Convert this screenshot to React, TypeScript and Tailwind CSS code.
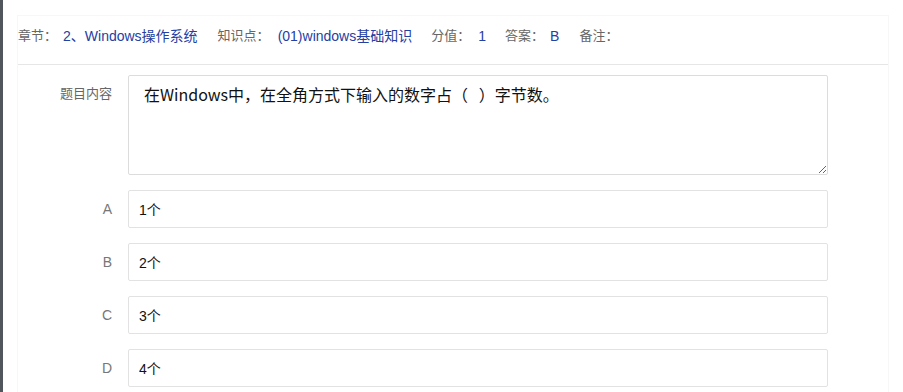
import React from "react";

const font = "font-['Liberation_Sans','Noto_Sans_CJK_SC',sans-serif]";

function Opt({ k, v }: { k: string; v: string }) {
  return (
    <div className="flex items-center">
      <div className="w-[110px] pr-[16px] text-right text-[14px] text-[#777]">{k}</div>
      <input
        readOnly
        value={v}
        className="h-[38px] w-[700px] rounded-[2px] border border-[#e2e2e2] bg-white pl-[10px] text-[14px] text-[#111] outline-none"
      />
    </div>
  );
}

export default function App() {
  return (
    <div className={`flex h-[392px] w-[903px] overflow-hidden bg-white ${font}`}>
      <div className="w-[3px] shrink-0 bg-[#51555c]" />
      <div className="ml-[14px] mt-[15px] w-[872px] shrink-0 border-x border-t border-[#f7f7f7]">
        <div className="flex h-[49px] items-start border-b border-[#e6e6e6] pt-[10px] text-[13px] leading-[20px]">
          <span className="text-[#666]">章节：</span>
          <span className="ml-[6px] text-[14px] text-[#2440a3]">2、Windows操作系统</span>
          <span className="ml-[20px] text-[#666]">知识点：</span>
          <span className="ml-[8px] text-[14px] text-[#2440a3]">(01)windows基础知识</span>
          <span className="ml-[19px] text-[#666]">分值：</span>
          <span className="ml-[8px] text-[14px] text-[#2440a3]">1</span>
          <span className="ml-[19px] text-[#666]">答案：</span>
          <span className="ml-[6px] text-[14px] text-[#2440a3]">B</span>
          <span className="ml-[20px] text-[#666]">备注：</span>
        </div>
        <div className="mt-[10px] flex flex-col gap-[15px]">
          <div className="flex items-start">
            <div className="w-[110px] pr-[16px] pt-[9px] text-right text-[13px] leading-[20px] text-[#666]">题目内容</div>
            <textarea
              readOnly
              defaultValue="在Windows中，在全角方式下输入的数字占（   ）字节数。"
              className="h-[100px] w-[700px] rounded-[2px] border border-[#dcdcdc] bg-white pl-[15px] pt-[6px] text-[16px] leading-[24px] text-[#111] outline-none font-['Noto_Sans_CJK_SC',sans-serif]"
            />
          </div>
          <Opt k="A" v="1个" />
          <Opt k="B" v="2个" />
          <Opt k="C" v="3个" />
          <Opt k="D" v="4个" />
        </div>
      </div>
    </div>
  );
}
